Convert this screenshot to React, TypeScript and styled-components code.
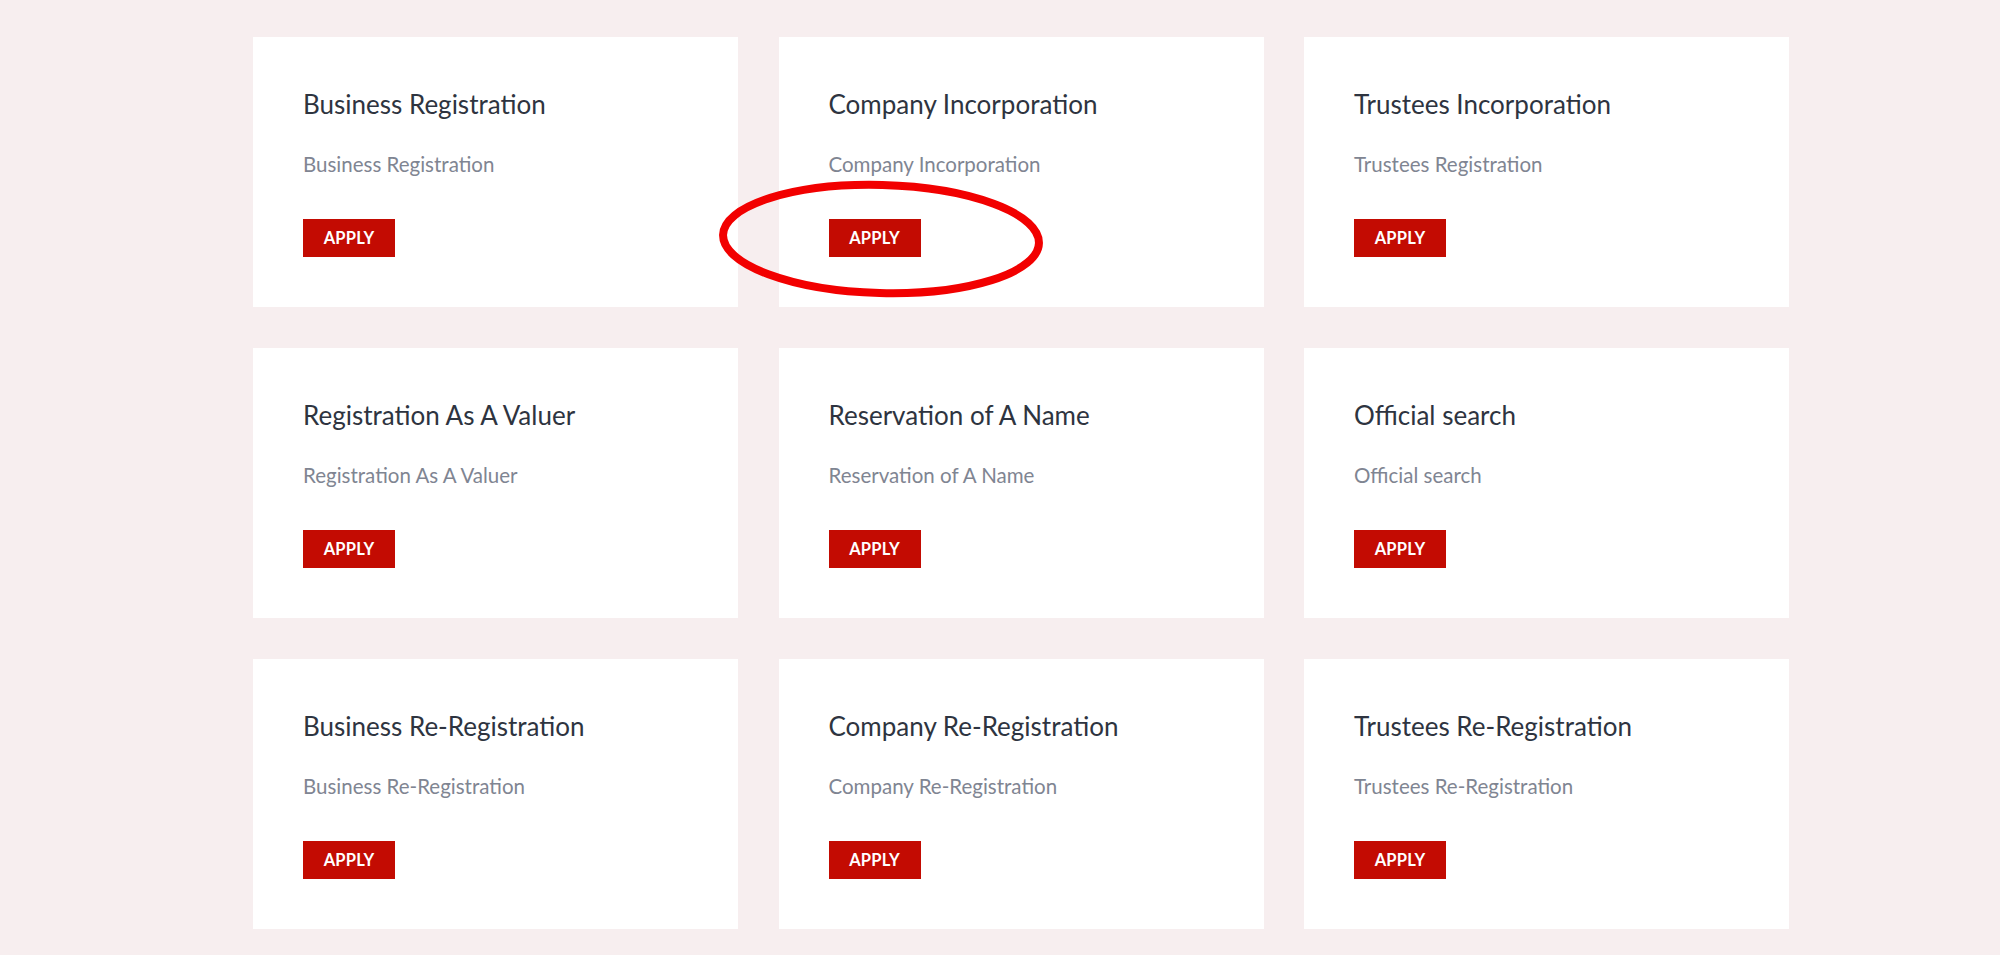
import React from 'react'
import styled, { createGlobalStyle } from 'styled-components';

const GlobalStyle = createGlobalStyle`
	html, body {
		margin: 0;
		padding: 0;
		background: #f7eeef;
		font-family: Lato, "Open Sans", sans-serif;
	}
`;

const Page = styled.div`
	min-height: 955px;
	padding: 37px 0 0 253px;
	box-sizing: border-box;
`;

const Grid = styled.div`
	position: relative;
	display: grid;
	grid-template-columns: repeat(3, 485px);
	column-gap: 40.5px;
	row-gap: 41px;
`;

const Card = styled.div`
	background: #ffffff;
	height: 270px;
	box-sizing: border-box;
	padding: 52px 50px 0 50px;
	display: flex;
	flex-direction: column;
	align-items: flex-start;
`;

const Title = styled.h3`
	font-size: 26px;
	line-height: 31px;
	font-weight: 400;
	color: #2e3440;
	margin: 0 0 32px 0;
`;

const Subtitle = styled.p`
	font-size: 20.5px;
	line-height: 25px;
	font-weight: 400;
	color: #7f8592;
	margin: 0 0 42px 0;
`;

const ApplyButton = styled.button`
	height: 38px;
	width: 92px;
	padding: 0;
	border: none;
	border-radius: 0;
	background: #c30b02;
	color: #ffffff;
	font-family: Lato, "Open Sans", sans-serif;
	font-size: 16.5px;
	font-weight: 700;
	letter-spacing: 0.2px;
	cursor: pointer;
`;

const Highlight = styled.svg`
	position: absolute;
	left: 465px;
	top: 143px;
	width: 326px;
	height: 118px;
	overflow: visible;
	pointer-events: none;
`;

const services = [
	{ title: 'Business Registration', subtitle: 'Business Registration' },
	{ title: 'Company Incorporation', subtitle: 'Company Incorporation' },
	{ title: 'Trustees Incorporation', subtitle: 'Trustees Registration' },
	{ title: 'Registration As A Valuer', subtitle: 'Registration As A Valuer' },
	{ title: 'Reservation of A Name', subtitle: 'Reservation of A Name' },
	{ title: 'Official search', subtitle: 'Official search' },
	{ title: 'Business Re-Registration', subtitle: 'Business Re-Registration' },
	{ title: 'Company Re-Registration', subtitle: 'Company Re-Registration' },
	{ title: 'Trustees Re-Registration', subtitle: 'Trustees Re-Registration' },
];

const App = () => {
	return (
		<>
			<GlobalStyle />
			<Page>
				<Grid>
					{services.map((s) => (
						<Card key={s.title}>
							<Title>{s.title}</Title>
							<Subtitle>{s.subtitle}</Subtitle>
							<ApplyButton>APPLY</ApplyButton>
						</Card>
					))}
					<Highlight viewBox="0 0 326 118">
						<ellipse
							cx="163"
							cy="59"
							rx="158"
							ry="54"
							fill="none"
							stroke="#f20000"
							strokeWidth="8"
							transform="rotate(1.5 163 59)"
						/>
					</Highlight>
				</Grid>
			</Page>
		</>
	)
}

export default App
